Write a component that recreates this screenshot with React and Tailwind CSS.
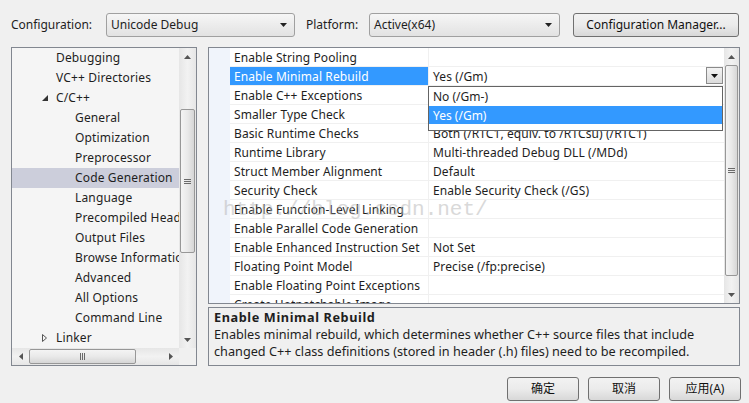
import React from "react";

const FONT = { fontFamily: '"Noto Sans", "Noto Sans CJK SC", sans-serif' };

function Combo({ text, className }) {
  return (
    <div className={"flex h-[24px] items-center justify-between rounded-[3px] border border-[#a0a0a0] bg-gradient-to-b from-[#f6f6f6] to-[#e2e2e2] pl-[4px] pr-[7px] " + className}>
      <span className="text-[12px] text-[#1e1e1e]">{text}</span>
      <svg width="7" height="4" viewBox="0 0 7 4"><path d="M0 0H7L3.5 4Z" fill="#222" /></svg>
    </div>
  );
}

function Btn({ children, className }) {
  return (
    <div className={"flex h-[24px] items-center justify-center rounded-[3px] border border-[#707070] bg-gradient-to-b from-[#f2f2f2] via-[#ebebeb] to-[#d8d8d8] text-[12px] text-[#111] " + className}>
      {children}
    </div>
  );
}

const tree = [
  { t: "Debugging", l: 1 },
  { t: "VC++ Directories", l: 1 },
  { t: "C/C++", l: 1, open: true },
  { t: "General", l: 2 },
  { t: "Optimization", l: 2 },
  { t: "Preprocessor", l: 2 },
  { t: "Code Generation", l: 2, sel: true },
  { t: "Language", l: 2 },
  { t: "Precompiled Headers", l: 2 },
  { t: "Output Files", l: 2 },
  { t: "Browse Information", l: 2 },
  { t: "Advanced", l: 2 },
  { t: "All Options", l: 2 },
  { t: "Command Line", l: 2 },
  { t: "Linker", l: 1, closed: true },
];

const props = [
  ["Enable String Pooling", ""],
  ["Enable Minimal Rebuild", "Yes (/Gm)"],
  ["Enable C++ Exceptions", ""],
  ["Smaller Type Check", ""],
  ["Basic Runtime Checks", "Both (/RTC1, equiv. to /RTCsu) (/RTC1)"],
  ["Runtime Library", "Multi-threaded Debug DLL (/MDd)"],
  ["Struct Member Alignment", "Default"],
  ["Security Check", "Enable Security Check (/GS)"],
  ["Enable Function-Level Linking", ""],
  ["Enable Parallel Code Generation", ""],
  ["Enable Enhanced Instruction Set", "Not Set"],
  ["Floating Point Model", "Precise (/fp:precise)"],
  ["Enable Floating Point Exceptions", ""],
  ["Create Hotpatchable Image", ""],
];

function Arrow({ dir }) {
  const d = {
    up: "M0 4L3.5 0L7 4Z",
    down: "M0 0H7L3.5 4Z",
  }[dir];
  return (
    <svg width="7" height="4" viewBox="0 0 7 4"><path d={d} fill="#555" /></svg>
  );
}

function HArrow({ dir }) {
  const d = dir === "left" ? "M4 0V7L0 3.5Z" : "M0 0V7L4 3.5Z";
  return (
    <svg width="4" height="7" viewBox="0 0 4 7"><path d={d} fill="#555" /></svg>
  );
}

function Grip({ vertical }) {
  return vertical ? (
    <div className="flex flex-col gap-[1px]">
      <div className="h-[1px] w-[7px] bg-[#6a6a6a]" />
      <div className="h-[1px] w-[7px] bg-[#6a6a6a]" />
      <div className="h-[1px] w-[7px] bg-[#6a6a6a]" />
    </div>
  ) : (
    <div className="flex gap-[1px]">
      <div className="h-[7px] w-[1px] bg-[#6a6a6a]" />
      <div className="h-[7px] w-[1px] bg-[#6a6a6a]" />
      <div className="h-[7px] w-[1px] bg-[#6a6a6a]" />
    </div>
  );
}

export default function App() {
  return (
    <div className="relative h-[403px] w-[749px] overflow-hidden bg-[#f0f0f0] text-[12px] text-[#1e1e1e]" style={FONT}>
      {/* top bar */}
      <div className="flex h-[47px] items-start pl-[11px] pt-[13px]">
        <div className="flex h-[24px] w-[95px] items-center">Configuration:</div>
        <Combo text="Unicode Debug" className="w-[189px]" />
        <div className="ml-[11px] flex h-[24px] w-[63px] items-center">Platform:</div>
        <Combo text="Active(x64)" className="w-[191px]" />
        <Btn className="ml-[13px] w-[166px] rounded-[3px]">Configuration Manager...</Btn>
      </div>

      {/* body */}
      <div className="flex gap-[11px] pl-[11px]">
        {/* tree */}
        <div className="flex h-[319px] w-[186px] flex-col border border-[#828790] bg-[#f5f5f5]">
          <div className="flex h-[300px]">
            <div className="w-[167px] overflow-hidden">
              {tree.map((r) => (
                <div
                  key={r.t}
                  className={"flex h-[20px] items-center whitespace-nowrap tracking-[0.15px] " + (r.sel ? "bg-[#cccedb]" : "")}
                >
                  <div className={r.l === 1 ? "w-[44px] shrink-0" : "w-[63px] shrink-0"}>
                    {r.open && (
                      <svg className="ml-[30px]" width="6" height="6" viewBox="0 0 6 6"><path d="M6 0V6H0Z" fill="#333" /></svg>
                    )}
                    {r.closed && (
                      <svg className="ml-[30px]" width="5" height="8" viewBox="0 0 5 8"><path d="M0.5 0.5V7.5L4.5 4Z" fill="none" stroke="#555" /></svg>
                    )}
                  </div>
                  <span>{r.t}</span>
                </div>
              ))}
            </div>
            {/* vertical scrollbar */}
            <div className="flex w-[17px] flex-col items-center bg-gradient-to-r from-[#e6e6e6] via-[#f2f2f2] to-[#e6e6e6]">
              <div className="flex h-[17px] items-center justify-center"><Arrow dir="up" /></div>
              <div className="flex-1 w-full px-[1px]">
                <div className="mt-[44px] flex h-[144px] w-full items-center justify-center rounded-[2px] border border-[#979797] bg-gradient-to-r from-[#f4f4f4] via-[#e9e9e9] to-[#d6d6d6]">
                  <Grip vertical />
                </div>
              </div>
              <div className="flex h-[17px] items-center justify-center"><Arrow dir="down" /></div>
            </div>
          </div>
          {/* horizontal scrollbar */}
          <div className="flex h-[17px]">
            <div className="flex w-[167px] items-center bg-gradient-to-b from-[#e6e6e6] via-[#f2f2f2] to-[#e6e6e6]">
              <div className="flex w-[17px] items-center justify-center"><HArrow dir="left" /></div>
              <div className="flex h-[15px] w-[107px] items-center justify-center rounded-[2px] border border-[#979797] bg-gradient-to-b from-[#f4f4f4] via-[#e9e9e9] to-[#d6d6d6]">
                <Grip />
              </div>
              <div className="flex-1" />
              <div className="flex w-[17px] items-center justify-center"><HArrow dir="right" /></div>
            </div>
            <div className="w-[17px] bg-[#f0f0f0]" />
          </div>
        </div>

        {/* right side */}
        <div className="flex w-[532px] flex-col gap-[3px]">
          <div className="relative flex h-[257px] border border-[#828790] bg-white">
            <div className="w-[21px] shrink-0 bg-[#f0f4fb]" />
            <div className="w-[494px] overflow-hidden">
              {props.map(([n, v], i) => {
                const sel = i === 1;
                return (
                  <div key={n} className="flex h-[19px] shrink-0 border-b border-[#f0f0f0]">
                    <div className={"flex w-[199px] shrink-0 items-center overflow-hidden whitespace-nowrap border-r border-[#f0f0f0] pl-[4px] pt-[2px] tracking-[0.1px] " + (sel ? "bg-[#3399ff] text-white" : "")}>
                      {n}
                    </div>
                    <div className="relative flex flex-1 items-center whitespace-nowrap pl-[4px] pt-[2px] tracking-[0.1px]">
                      {v}
                      {sel && (
                        <div className="absolute right-[1px] top-[0px] flex h-[17px] w-[17px] items-center justify-center border border-[#8a8a8a] bg-gradient-to-b from-[#f3f3f3] to-[#dcdcdc]">
                          <svg width="7" height="4" viewBox="0 0 7 4"><path d="M0 0H7L3.5 4Z" fill="#111" /></svg>
                        </div>
                      )}
                    </div>
                  </div>
                );
              })}
            </div>
            {/* grid scrollbar */}
            <div className="flex w-[15px] flex-col items-center bg-gradient-to-r from-[#e6e6e6] via-[#f2f2f2] to-[#e6e6e6]">
              <div className="flex h-[17px] items-center justify-center"><Arrow dir="up" /></div>
              <div className="flex-1 w-full px-[1px]">
                <div className="flex h-[211px] w-full items-center justify-center rounded-[2px] border border-[#979797] bg-gradient-to-r from-[#f4f4f4] via-[#e9e9e9] to-[#d6d6d6]">
                  <Grip vertical />
                </div>
              </div>
              <div className="flex h-[17px] items-center justify-center"><Arrow dir="down" /></div>
            </div>

            {/* dropdown list */}
            <div className="absolute left-[219px] top-[38px] h-[45px] w-[295px] border border-[#646464] bg-white">
              <div className="flex h-[19px] items-center pl-[4px] pt-[1px]">No (/Gm-)</div>
              <div className="flex h-[18px] items-center bg-[#3399ff] pl-[4px] pt-[1px] text-white">Yes (/Gm)</div>
            </div>

            {/* watermark */}
            <div
              className="pointer-events-none absolute left-[14px] top-[150px] whitespace-nowrap text-[21px] leading-[24px] text-[#b4b4b4] opacity-50"
              style={{ fontFamily: '"Liberation Mono", monospace' }}
            >
              http://blog.csdn.net/
            </div>
          </div>

          <div className="h-[59px] border border-[#828790] bg-[#f0f0f0] px-[5px] pt-[1px] text-[12.7px] leading-[17px]">
            <div className="font-bold tracking-[0.6px]">Enable Minimal Rebuild</div>
            <div>Enables minimal rebuild, which determines whether C++ source files that include</div>
            <div>changed C++ class definitions (stored in header (.h) files) need to be recompiled.</div>
          </div>
        </div>
      </div>

      {/* buttons */}
      <div className="mt-[11px] flex justify-end gap-[9px] pr-[8px]">
        <Btn className="w-[72px]">确定</Btn>
        <Btn className="w-[72px]">取消</Btn>
        <Btn className="w-[72px]">应用(A)</Btn>
      </div>
    </div>
  );
}
